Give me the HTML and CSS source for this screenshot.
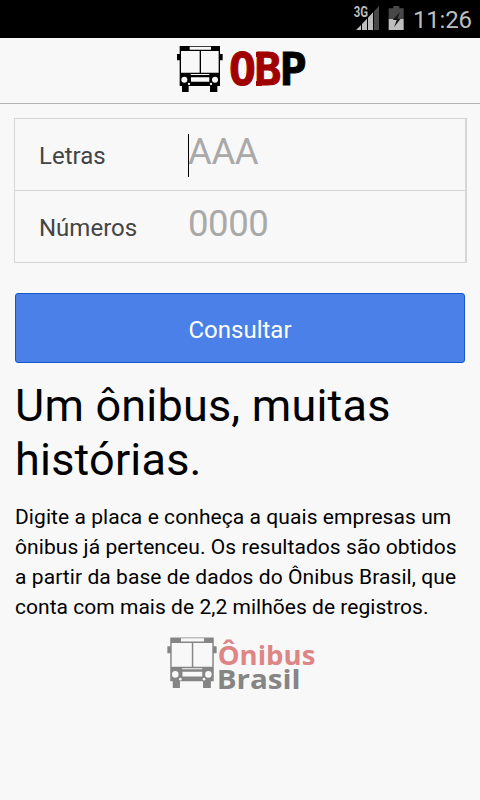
FILE: index.html
```
<!DOCTYPE html>
<html lang="pt-BR">
<head>
<meta charset="utf-8">
<title>OBP</title>
<link rel="stylesheet" href="styles.css">
</head>
<body>
<svg class="defs" width="0" height="0" aria-hidden="true">
  <symbol id="bus" viewBox="8 10 139 142" preserveAspectRatio="none">
    <path d="M17 12h121v120H17zM9 36h8v19H9zM138 36h8v19h-8zM24 130h20v20H24zM108 130h22v20h-22z" fill="currentColor"/>
    <path d="M21 27h56v65H21zM81 27h53v65H81zM47 14h64v9H47zM50 96h56v3H50zM51 106h55v13H51z" class="glass"/>
    <circle cx="31" cy="113" r="9" class="glass"/><circle cx="123" cy="113" r="9" class="glass"/>
    <circle cx="45" cy="126" r="3.5" class="glass"/><circle cx="111" cy="126" r="3.5" class="glass"/>
  </symbol>
</svg>
<div class="status">
  <svg width="56" height="38" viewBox="0 0 168 114">
    <path d="M54 34l15-16v72H54z" fill="#484848"/>
    <path d="M36 53l15-16v53H36zM18 72l15-16v34H18zM0 90l15-15v15z" fill="#bebebe"/>
    <path d="M98 25h14v-7h18v7h13v32H98z" fill="#484848"/>
    <path d="M98 57h45v33H98z" fill="#bebebe"/>
    <path d="M132 36l-22 24h12l-8 22 20-26h-10z" fill="#161616"/>
    <text x="-7" y="51" class="net" textLength="43" lengthAdjust="spacingAndGlyphs">3G</text>
  </svg>
  <span class="clock">11:26</span>
</div>
<header class="header">
  <svg width="140" height="65" viewBox="0 0 420 195">
    <use href="#bus" x="20" y="22" width="139" height="142"/>
    <text x="177" y="142" class="obp"><tspan class="red">OB</tspan><tspan>P</tspan></text>
    <path d="M258 42h18v15h-18zM258 129h18v15h-18z" fill="#a00000"/>
  </svg>
</header>
<main class="main">
  <div class="form">
    <div class="row"><span class="label">Letras</span><span class="value focus">AAA</span></div>
    <div class="row"><span class="label">Números</span><span class="value">0000</span></div>
  </div>
  <button class="btn">Consultar</button>
  <h1>Um ônibus, muitas histórias.</h1>
  <p>Digite a placa e conheça a quais empresas um<br>ônibus já pertenceu. Os resultados são obtidos<br>a partir da base de dados do Ônibus Brasil, que<br><span class="last">conta com mais de 2,2 milhões de registros.</span></p>
</main>
<footer class="footer">
  <svg width="160" height="66" viewBox="0 0 480 198">
    <use href="#bus" x="21" y="20" width="150" height="156" class="gray"/>
    <text x="173" y="104" class="brand pink" textLength="293" lengthAdjust="spacingAndGlyphs">Ônibus</text>
    <text x="170" y="176" class="brand dim" textLength="252" lengthAdjust="spacingAndGlyphs">Brasil</text>
  </svg>
</footer>
</body>
</html>
```
FILE: styles.css
```
* { box-sizing: border-box; }
body { margin: 0; height: 800px; overflow: hidden; background: #f8f8f8; color: #000; font-family: Roboto, sans-serif; }
.defs { display: block; }
.glass { fill: #f8f8f8; }
.status { height: 38px; background: #000; display: flex; justify-content: flex-end; padding-right: 8px; }
.status svg { overflow: visible; }
.net { font: bold 42px Roboto, sans-serif; fill: #bebebe; stroke: #000; stroke-width: 3px; paint-order: stroke; }
.clock { width: 60px; padding-left: 1px; font-size: 24px; line-height: 40px; color: #bebebe; letter-spacing: -0.2px; }
.header { height: 66px; border-bottom: 1px solid #b2b2b2; display: flex; justify-content: center; }
.header svg { overflow: visible; }
.obp { font: bold 134px "DejaVu Sans Mono", monospace; letter-spacing: -4.5px; stroke: #000; stroke-width: 3px; }
.red { fill: #a00000; stroke: #a00000; }
.main { padding: 14px 13px 0 14px; }
.form { border: 1px solid #d6d6d6; border-right-width: 2px; height: 145px; }
.row { display: flex; height: 71px; padding-left: 24px; }
.row + .row { border-top: 1px solid #d6d6d6; height: 72px; }
.label { width: 149px; font-size: 24px; line-height: 74px; color: #444; }
.value { font-size: 36.5px; line-height: 66px; letter-spacing: -0.4px; color: #a9a9a9; position: relative; }
.focus::before { content: ""; position: absolute; left: 0; top: 15px; width: 1px; height: 43px; background: #000; }
.btn { display: block; width: 450px; height: 70px; margin: 30px 0 0 1px; padding: 4px 0 0; border: 1px solid #1458cc; border-radius: 3px; background: #4a80e8; color: #fff; font: 24px Roboto, sans-serif; }
h1 { margin: 16px 0 0 1px; font-size: 45px; line-height: 54px; font-weight: 400; letter-spacing: 0.2px; }
p { margin: 15px 0 0 1px; font-size: 21px; line-height: 30px; white-space: nowrap; letter-spacing: 0.07px; }
.last { letter-spacing: 0.03px; }
.footer { display: flex; padding-left: 160px; margin-top: 8px; }
.gray { color: #858585; }
.brand { font: bold 82px "Open Sans", sans-serif; }
.pink { fill: #de8686; }
.dim { fill: #858585; }
```
